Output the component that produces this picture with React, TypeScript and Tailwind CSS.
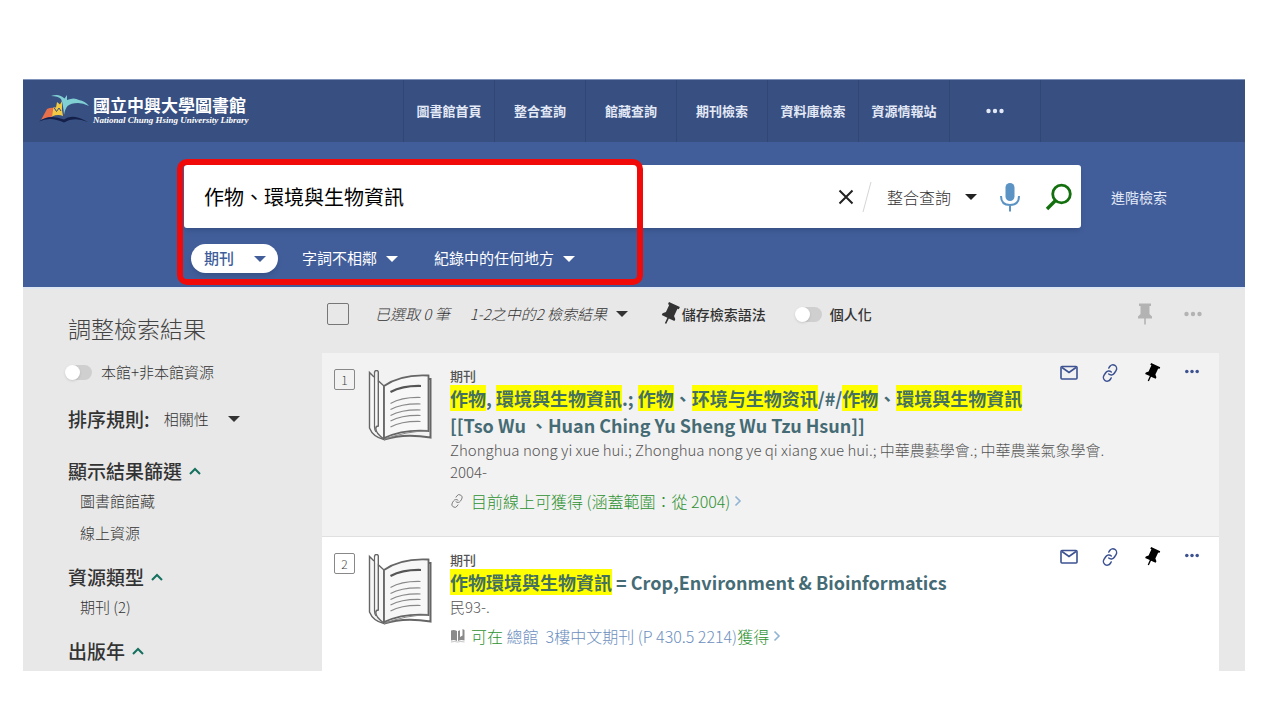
import type { FC, ReactNode } from 'react';
import { Link as LinkIcon } from 'lucide-react';

interface IconProps {
  className?: string;
}

const Caret: FC<IconProps> = ({ className }) => (
  <svg viewBox="0 0 12 6" className={`h-[6px] w-3 shrink-0 ${className ?? ''}`}>
    <path d="M0 0h12L6 6z" fill="currentColor" />
  </svg>
);

const Pin: FC<IconProps> = ({ className }) => (
  <svg viewBox="0 0 24 24" className={`shrink-0 ${className ?? ''}`}>
    <path
      d="M16.500 12V4H18V1.500H6V4h1.500v8L5 14.500V16.500h6.200v6h1.600v-6H19v-2z"
      fill="currentColor"
    />
  </svg>
);

const Dots: FC<IconProps> = ({ className }) => (
  <svg viewBox="0 0 20 6" className={`shrink-0 ${className ?? ''}`}>
    <circle cx="3.5" cy="3" r="2.2" fill="currentColor" />
    <circle cx="10" cy="3" r="2.2" fill="currentColor" />
    <circle cx="16.5" cy="3" r="2.2" fill="currentColor" />
  </svg>
);

const MailIcon: FC = () => (
  <svg viewBox="0 0 18 18" className="h-[18px] w-[18px]" fill="none" stroke="currentColor" strokeWidth="1.6">
    <rect x="1" y="2.500" width="16" height="12.500" rx="1" />
    <path d="M2 3.500l7 5 7-5" />
  </svg>
);

const ChevronUp: FC = () => (
  <svg viewBox="0 0 12 8" className="h-2 w-3" fill="none" stroke="#14705f" strokeWidth="2">
    <path d="M1 7l5-5 5 5" />
  </svg>
);

const ChevronRight: FC = () => (
  <svg viewBox="0 0 8 12" className="h-3 w-2" fill="none" stroke="#8fb4d4" strokeWidth="1.6">
    <path d="M1.5 1.5L6 6l-4.5 4.5" />
  </svg>
);

const ShelfIcon: FC = () => (
  <svg viewBox="0 0 16 14" className="h-[14px] w-4 shrink-0">
    <path d="M1 1.500Q4 .5 7 2v10Q4 10.500 1 11.500z" fill="#8a8a8a" />
    <path d="M8 2l2-.8V8l2.500-1.500V0L14.500 1v10.500Q11 10.500 8 12z" fill="#8a8a8a" />
    <path d="M1 13q4-1 6.500 0 3-1 7 0" fill="none" stroke="#b5b5b5" strokeWidth=".8" />
  </svg>
);

const BookIcon: FC = () => (
  <svg viewBox="0 0 64 71" className="h-[71px] w-16 shrink-0" fill="none" stroke="#666" strokeWidth="1.4">
    <path d="M6 7L1.500 2.500V58Q5 67 16 69.500V16L10 10.500" fill="#f7f7f7" />
    <path d="M16 16Q33 4 60.500 5.500V61Q36 59 16 68z" fill="#f7f7f7" strokeWidth="1.800" />
    <path d="M60.500 9h2v58.500Q36 63 16 69.500" strokeWidth="2" />
    <path d="M16 69.500Q38 61 60 61" stroke="#888" strokeWidth="1" />
    <path d="M6.500 3q0-2.500 2-2.500t1.800 2.500v53q-2.500 0-2.500 2.500 0 5 8.200 10.500" />
    <path d="M6.500 3v54q0 3 1.500 5" strokeWidth="1.200" />
    <path d="M22.500 22Q35 15.500 53 16" strokeWidth="2.200" stroke="#555" />
    <g strokeWidth="1.200" stroke="#888">
      <path d="M22.500 33.500Q34 27 52.500 27.500" />
      <path d="M22.500 39.500Q34 33.500 52.500 34" />
      <path d="M22.500 45.500Q34 39.500 52.500 40" />
      <path d="M22.500 51Q34 45 52.500 45.500" />
      <path d="M22.500 57Q34 51 52.500 51.500" />
    </g>
  </svg>
);

const LogoMark: FC = () => (
  <svg viewBox="0 0 50 32" className="h-8 w-[50px] shrink-0">
    <path d="M2 26L8 15q4-2 8-1l-3 9q-6 0-11 3z" fill="#e8704a" />
    <path d="M13 22.500L14.500 13l2.500.5L18 8l3 2.500L23 7v9l1 6q-5-2-11 .5z" fill="#f2c945" />
    <path d="M15 13.500l2.500 4L20 14l2 3" fill="none" stroke="#374f81" strokeWidth="1" />
    <path d="M25 21Q24 9 22 5 19 2 12 2 20-1 25.500 4.500L28 1v5q7-3 12 0 6 1 10 6-6-3-11-3-7 0-10.500 3Q26 15 25 21z" fill="#7fcfd3" />
    <path d="M0 27.500Q10 19.500 25 25.500 33 19 49 28 35 22.500 25 28.500 11 22 0 27.500z" fill="#14204a" />
  </svg>
);

interface DropdownProps {
  label: string;
  value: string;
  selectClass: string;
  caretClass?: string;
}

const Dropdown: FC<DropdownProps> = ({ label, value, selectClass, caretClass }) => (
  <span className="flex items-center">
    <select aria-label={label} className={`appearance-none bg-transparent outline-none ${selectClass}`}>
      <option>{value}</option>
    </select>
    <Caret className={`pointer-events-none ${caretClass ?? ''}`} />
  </span>
);

const Toggle: FC<{ label: string; className: string }> = ({ label, className }) => (
  <label className={`flex items-center ${className}`}>
    <input
      type="checkbox"
      role="switch"
      className="flex h-[15px] w-6 shrink-0 appearance-none items-center rounded-full bg-[#cfcfcf] before:-ml-[3px] before:h-[15px] before:w-[15px] before:rounded-full before:bg-white before:shadow-sm"
    />
    {label}
  </label>
);

const navItems = ['圖書館首頁', '整合查詢', '館藏查詢', '期刊檢索', '資料庫檢索', '資源情報站'];

const Header: FC = () => (
  <header className="flex h-[63px] border-t border-[#7f93bb] bg-[#374f81]">
    <a href="#" className="flex w-[380px] items-center pb-[3px] pl-4 text-white">
      <LogoMark />
      <span className="ml-1 flex flex-col">
        <span className="text-[17px] leading-5 font-bold">國立中興大學圖書館</span>
        <span className="font-['Liberation_Serif',serif] text-[9px] leading-[10px] font-bold italic">
          National Chung Hsing University Library
        </span>
      </span>
    </a>
    <nav className="flex border-l border-[#304775] text-[13px] font-bold text-[#e3e9f6]">
      {navItems.map((item) => (
        <a
          key={item}
          href="#"
          className="flex w-[91px] items-center justify-center border-r border-[#304775]"
        >
          {item}
        </a>
      ))}
      <button aria-label="更多" className="flex w-[91px] items-center justify-center border-r border-[#304775]">
        <Dots className="h-[6px] w-5" />
      </button>
    </nav>
  </header>
);

const SearchBar: FC = () => (
  <section className="relative h-[145px] bg-[#415e9b] pt-[23px] pr-[76px] pl-[161px]">
    <div className="flex items-center">
      <div className="flex h-[63px] flex-1 items-center rounded-[3px] bg-white pr-2 pl-5 shadow-md">
        <input
          type="text"
          aria-label="檢索詞"
          defaultValue="作物、環境與生物資訊"
          className="min-w-0 flex-1 text-xl text-black outline-none"
        />
        <button aria-label="清除">
          <svg viewBox="0 0 16 16" className="h-4 w-4" stroke="#222" strokeWidth="2">
            <path d="M1.500 1.500l13 13M14.500 1.500l-13 13" />
          </svg>
        </button>
        <svg viewBox="0 0 10 32" className="mr-[15px] ml-2 h-8 w-[10px]" stroke="#d5d5d5">
          <path d="M9 1L1 31" />
        </svg>
        <Dropdown
          label="檢索範圍"
          value="整合查詢"
          selectClass="w-[78px] text-base font-light text-[#333]"
          caretClass="text-[#222]"
        />
        <button aria-label="語音檢索" className="ml-[22px]">
          <svg viewBox="0 0 22 30" className="h-[30px] w-[22px]" fill="none" stroke="#5b94c4" strokeWidth="2">
            <rect x="6.500" y="1" width="9" height="18" rx="4.500" fill="#5b94c4" stroke="none" />
            <path d="M2 14q0 9 9 9t9-9M11 23v6.500" />
          </svg>
        </button>
        <button aria-label="檢索" className="ml-6">
          <svg viewBox="0 0 28 28" className="h-7 w-7" fill="none" stroke="#14700f" strokeWidth="2.800">
            <circle cx="16.500" cy="11" r="8.800" />
            <path d="M10.500 17.500L2 26" strokeWidth="3.400" />
          </svg>
        </button>
      </div>
      <a href="#" className="ml-[30px] w-[58px] text-sm whitespace-nowrap text-[#e3e9f6]">
        進階檢索
      </a>
    </div>
    <div className="mt-4 flex items-center pl-[7px] text-[15px] text-white">
      <div className="mr-6 flex h-[29px] items-center rounded-full bg-white pr-3 pl-[13px] text-[#415e9b] shadow-md">
        <Dropdown label="資源類型" value="期刊" selectClass="w-[50px] font-medium" />
      </div>
      <Dropdown label="比對方式" value="字詞不相鄰" selectClass="mr-2" />
      <span className="w-9" />
      <Dropdown label="檢索欄位" value="紀錄中的任何地方" selectClass="mr-2" />
    </div>
    {/* callout around the query and its filters */}
    <div className="pointer-events-none absolute top-[17px] left-[154px] h-[126px] w-[466px] rounded-[10px] border-[6px] border-[#f00a0a]" />
  </section>
);

const FacetGroup: FC<{ title: string; items: string[] }> = ({ title, items }) => (
  <div className="mt-[18px]">
    <button className="flex items-center gap-[7px] text-[19px] leading-7 font-medium text-[#333]">
      {title}
      <ChevronUp />
    </button>
    {items.length > 0 && (
      <ul className="mt-1 space-y-2 pl-3 text-[15px] leading-6 font-light text-[#333]">
        {items.map((item) => (
          <li key={item}>
            <a href="#">{item}</a>
          </li>
        ))}
      </ul>
    )}
  </div>
);

const Sidebar: FC = () => (
  <aside className="w-[299px] shrink-0 pt-6 pl-[45px]">
    <h2 className="text-[23px] leading-[30px] font-light text-[#444]">調整檢索結果</h2>
    <Toggle
      label="本館+非本館資源"
      className="mt-[17px] gap-[9px] text-[15px] leading-6 font-light text-[#333]"
    />
    <div className="mt-[21px] mb-6 flex items-center text-[#333]">
      <span className="mr-[14px] text-[19px] leading-7 font-medium">排序規則:</span>
      <Dropdown
        label="排序規則"
        value="相關性"
        selectClass="w-16 text-[15px] font-light"
      />
    </div>
    <FacetGroup title="顯示結果篩選" items={['圖書館館藏', '線上資源']} />
    <FacetGroup title="資源類型" items={['期刊 (2)']} />
    <FacetGroup title="出版年" items={[]} />
  </aside>
);

const Toolbar: FC = () => (
  <div className="mb-3 flex h-[54px] items-center pl-[5px] text-[15px] text-[#333]">
    <input
      type="checkbox"
      aria-label="全選"
      className="h-[22px] w-[22px] appearance-none rounded-[2px] border border-[#777]"
    />
    <span className="ml-[26px] font-light italic">已選取 0 筆</span>
    <span className="ml-5 flex">
      <Dropdown
        label="每頁結果"
        value="1-2之中的2 檢索結果"
        selectClass="mr-2 text-[15px] font-light italic"
      />
    </span>
    <button className="ml-[30px] flex items-center text-sm font-medium">
      <Pin className="h-6 w-6 rotate-25" />
      儲存檢索語法
    </button>
    <Toggle label="個人化" className="ml-8 gap-2 text-sm font-medium" />
    <span className="ml-auto flex items-center gap-[26px] pr-4 text-[#b3b3b3]">
      <button aria-label="釘選">
        <Pin className="h-6 w-6" />
      </button>
      <button aria-label="更多">
        <Dots className="h-[6px] w-5" />
      </button>
    </span>
  </div>
);

interface ResultProps {
  index: number;
  title: ReactNode;
  details: string[];
  className: string;
  children: ReactNode;
}

const Result: FC<ResultProps> = ({ index, title, details, className, children }) => (
  <article className={`flex pt-2 pr-[19px] pl-3 ${className}`}>
    <span className="mt-2 flex h-[21px] w-[21px] shrink-0 items-center justify-center rounded-[2px] border border-[#888] text-xs font-light text-[#444]">
      {index}
    </span>
    <div className="mt-[9px] mr-[18px] ml-[13px]">
      <BookIcon />
    </div>
    <div className="min-w-0 flex-1">
      <div className="flex h-6 items-end justify-between">
        <span className="text-[13px] leading-[18px] font-medium text-[#555]">期刊</span>
        <span className="flex h-full items-center gap-[22px] text-[#3d5291]">
          <button aria-label="電子郵件">
            <MailIcon />
          </button>
          <button aria-label="永久連結">
            <LinkIcon size={18} strokeWidth={2} className="mx-px -rotate-12" />
          </button>
          <button aria-label="釘選" className="text-black">
            <Pin className="h-5 w-5 rotate-25" />
          </button>
          <button aria-label="更多" className="pb-1">
            <Dots className="h-[5px] w-4" />
          </button>
        </span>
      </div>
      <h3 className="text-lg leading-[27px] font-bold text-[#456b75]">
        <a href="#">{title}</a>
      </h3>
      <div className="text-[15px] leading-[22px] font-light text-[#555]">
        {details.map((line) => (
          <p key={line}>{line}</p>
        ))}
      </div>
      <div className="mt-[6px] flex items-center text-base leading-6 font-light text-[#2c9130]">
        {children}
      </div>
    </div>
  </article>
);

const Hit: FC<{ children: ReactNode }> = ({ children }) => (
  <mark className="bg-[#ffff00] text-[#44705f]">{children}</mark>
);

export default function App() {
  return (
    <div
      lang="zh-Hant"
      className="bg-white pt-[79px] pr-[35px] pb-[49px] pl-[23px] font-['Noto_Sans_CJK_TC','Noto_Sans_CJK_SC',sans-serif]"
    >
      <Header />
      <SearchBar />
      <div className="flex border-t-2 border-[#dfe6f3] bg-[#e8e8e8]">
        <Sidebar />
        <main className="-mt-[2px] min-w-0 flex-1 pr-[26px]">
          <Toolbar />
          <Result
            index={1}
            className="bg-[#f2f2f2] pb-[23px]"
            title={
              <>
                <Hit>作物</Hit>, <Hit>環境與生物資訊</Hit>.; <Hit>作物</Hit>、
                <Hit>环境与生物资讯</Hit>/#/<Hit>作物</Hit>、<Hit>環境與生物資訊</Hit>
                <br />
                [[Tso Wu 、Huan Ching Yu Sheng Wu Tzu Hsun]]
              </>
            }
            details={[
              'Zhonghua nong yi xue hui.; Zhonghua nong ye qi xiang xue hui.; 中華農藝學會.; 中華農業氣象學會.',
              '2004-',
            ]}
          >
            <LinkIcon size={14} strokeWidth={1.5} className="mr-[7px] -rotate-12 text-[#777]" />
            <a href="#" className="flex items-center gap-1">
              目前線上可獲得 (涵蓋範圍：從 2004)
              <ChevronRight />
            </a>
          </Result>
          <Result
            index={2}
            className="border-t border-[#e0e0e0] bg-white pb-[23px]"
            title={
              <>
                <Hit>作物環境與生物資訊</Hit> = Crop,Environment &amp; Bioinformatics
              </>
            }
            details={['民93-.']}
          >
            <ShelfIcon />
            <a href="#" className="ml-[5px] flex items-center gap-1">
              <span className="whitespace-pre">
                可在 <span className="text-[#6d8fbe]">總館  3樓中文期刊 (P 430.5 2214)</span>獲得
              </span>
              <ChevronRight />
            </a>
          </Result>
        </main>
      </div>
    </div>
  );
}
